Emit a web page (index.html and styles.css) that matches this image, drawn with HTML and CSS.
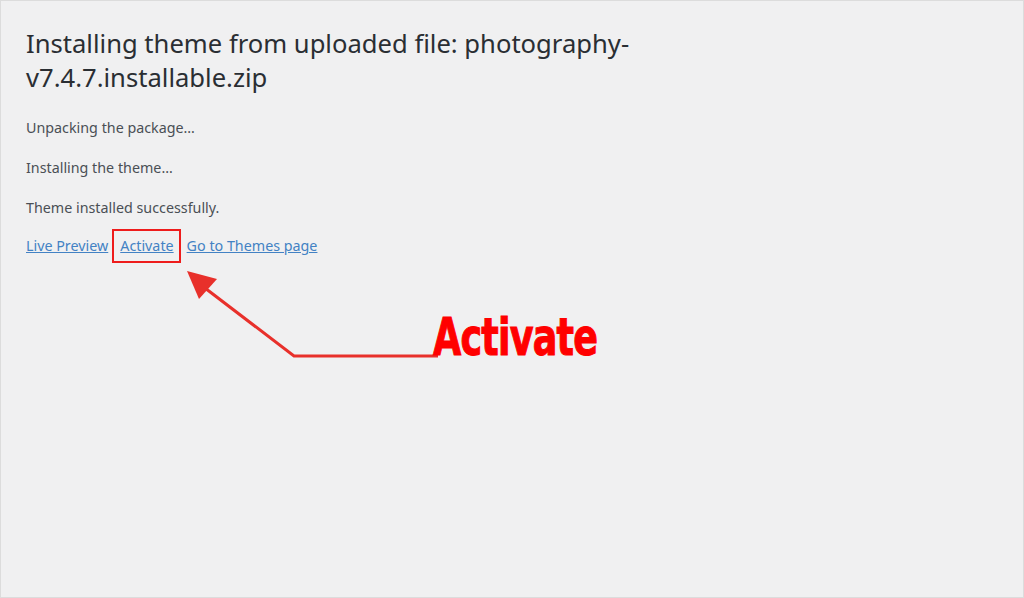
FILE: index.html
```html
<!DOCTYPE html>
<html lang="en">
<head>
    <meta charset="UTF-8">
    <title>Install Themes</title>
    <link rel="stylesheet" href="styles.css">
</head>
<body>
    <div class="wrap">
        <h1>Installing theme from uploaded file: photography-<br>v7.4.7.installable.zip</h1>
        <p>Unpacking the package&hellip;</p>
        <p>Installing the theme&hellip;</p>
        <p>Theme installed successfully.</p>
        <p class="actions">
            <a href="#">Live Preview</a>
            <a href="#" class="marked">Activate</a>
            <a href="#">Go to Themes page</a>
        </p>

        <svg class="pointer" width="460" height="140" viewBox="0 0 460 140">
            <polyline points="437,95 293,95 200,24" fill="none" stroke="#e8302b" stroke-width="3"/>
            <polygon points="186,10 216,18 198,38" fill="#e8302b"/>
        </svg>
        <div class="callout">Activate</div>
    </div>
</body>
</html>
```

FILE: styles.css
```css
html, body {
    margin: 0;
    height: 100%;
}
body {
    background: #f0f0f1;
    font-family: "Noto Sans", "Open Sans", sans-serif;
    color: #4a4f55;
}
.wrap {
    position: relative;
    box-sizing: border-box;
    height: 100%;
    padding: 26px 25px;
    border: 1px solid #dcdcdc;
}
h1 {
    margin: 0 0 23px;
    font-size: 25.6px;
    font-weight: 400;
    line-height: 34px;
    color: #2a2e33;
}
p {
    margin: 0 0 20px;
    font-size: 14.3px;
    line-height: 20px;
}
.actions {
    display: flex;
    align-items: center;
    gap: 5px;
    margin-top: -2px;
}
.actions a {
    color: #4382c4;
    text-decoration: underline;
}
.actions a.marked {
    padding: 5px 5px 5px 6px;
    margin: -7px 1px -7px -1px;
    border: 2px solid #ee1c1c;
}
.pointer {
    position: absolute;
    left: 0;
    top: 260px;
}
.callout {
    position: absolute;
    left: 432px;
    top: 306px;
    font-family: "Liberation Sans Narrow", "DejaVu Sans Condensed", sans-serif;
    font-weight: 700;
    font-size: 52px;
    line-height: 60px;
    color: #ff0000;
    letter-spacing: -1px;
    -webkit-text-stroke: 1px #ff0000;
    transform: scaleX(0.78);
    transform-origin: left top;
}
```
